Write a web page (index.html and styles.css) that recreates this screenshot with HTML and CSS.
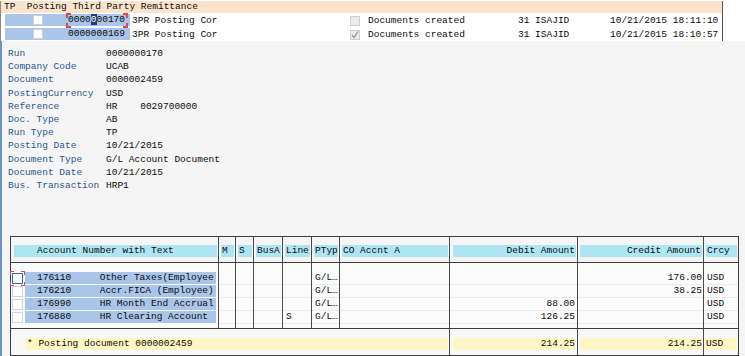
FILE: index.html
```html
<!DOCTYPE html>
<html lang="en">

<head>
    <meta charset="UTF-8" />
    <title>Posting Third Party Remittance</title>
    <link rel="stylesheet" href="styles.css">
</head>

<body>
    <div class="runs">
        <div class="runs-head">TP  Posting Third Party Remittance</div>
        <div class="run-row">
            <span class="key tp"></span>
            <span class="key post"><span class="box"></span></span>
            <span class="key num focus">0000<span class="caret">0</span>00170</span>
            <span class="desc">3PR Posting Cor</span>
            <span class="status"><span class="box off"></span></span>
            <span class="msg">Documents created</span>
            <span class="user">31 ISAJID</span>
            <span class="stamp">10/21/2015 18:11:10</span>
        </div>
        <div class="run-row">
            <span class="key tp"></span>
            <span class="key post"><span class="box"></span></span>
            <span class="key num">0000000169</span>
            <span class="desc">3PR Posting Cor</span>
            <span class="status"><span class="box off"><svg width="8" height="8" viewBox="0 0 8 8"><polyline points="1,4 3,6.5 7,0.5" fill="none" stroke="#8a8a8a" stroke-width="1.2" /></svg></span></span>
            <span class="msg">Documents created</span>
            <span class="user">31 ISAJID</span>
            <span class="stamp">10/21/2015 18:10:57</span>
        </div>
    </div>

    <div class="panel">
        <dl class="details">
            <div class="field"><dt>Run</dt><dd>0000000170</dd></div>
            <div class="field"><dt>Company Code</dt><dd>UCAB</dd></div>
            <div class="field"><dt>Document</dt><dd>0000002459</dd></div>
            <div class="field"><dt>PostingCurrency</dt><dd>USD</dd></div>
            <div class="field"><dt>Reference</dt><dd>HR    0029700000</dd></div>
            <div class="field"><dt>Doc. Type</dt><dd>AB</dd></div>
            <div class="field"><dt>Run Type</dt><dd>TP</dd></div>
            <div class="field"><dt>Posting Date</dt><dd>10/21/2015</dd></div>
            <div class="field"><dt>Document Type</dt><dd>G/L Account Document</dd></div>
            <div class="field"><dt>Document Date</dt><dd>10/21/2015</dd></div>
            <div class="field"><dt>Bus. Transaction</dt><dd>HRP1</dd></div>
        </dl>

        <div class="grid">
            <div class="grid-head">
                <div class="col c-acct"><span class="title acct-title">Account Number with Text</span></div>
                <div class="col c-m"><span class="title">M</span></div>
                <div class="col c-s"><span class="title">S</span></div>
                <div class="col c-busa"><span class="title">BusA</span></div>
                <div class="col c-line"><span class="title">Line</span></div>
                <div class="col c-ptyp"><span class="title">PTyp</span></div>
                <div class="col c-co"><span class="title">CO Accnt A</span></div>
                <div class="col c-debit"><span class="title right">Debit Amount</span></div>
                <div class="col c-credit"><span class="title right">Credit Amount</span></div>
                <div class="col c-crcy"><span class="title">Crcy</span></div>
            </div>

            <div class="grid-body">
                <div class="col c-acct">
                    <div class="cell acct"><span class="box focus-box"></span><span class="sel">176110     Other Taxes(Employee</span></div>
                    <div class="cell acct"><span class="box"></span><span class="sel">176210     Accr.FICA (Employee)</span></div>
                    <div class="cell acct"><span class="box"></span><span class="sel">176990     HR Month End Accrual</span></div>
                    <div class="cell acct"><span class="box"></span><span class="sel">176880     HR Clearing Account</span></div>
                </div>
                <div class="col c-m">
                    <div class="cell"></div><div class="cell"></div><div class="cell"></div><div class="cell"></div>
                </div>
                <div class="col c-s">
                    <div class="cell"></div><div class="cell"></div><div class="cell"></div><div class="cell"></div>
                </div>
                <div class="col c-busa">
                    <div class="cell"></div><div class="cell"></div><div class="cell"></div><div class="cell"></div>
                </div>
                <div class="col c-line">
                    <div class="cell"></div><div class="cell"></div><div class="cell"></div><div class="cell">S</div>
                </div>
                <div class="col c-ptyp">
                    <div class="cell">G/L…</div><div class="cell">G/L…</div><div class="cell">G/L…</div><div class="cell">G/L…</div>
                </div>
                <div class="col c-co">
                    <div class="cell"></div><div class="cell"></div><div class="cell"></div><div class="cell"></div>
                </div>
                <div class="col c-debit">
                    <div class="cell amount"></div>
                    <div class="cell amount"></div>
                    <div class="cell amount">88.00</div>
                    <div class="cell amount">126.25</div>
                </div>
                <div class="col c-credit">
                    <div class="cell amount">176.00</div>
                    <div class="cell amount">38.25</div>
                    <div class="cell amount"></div>
                    <div class="cell amount"></div>
                </div>
                <div class="col c-crcy">
                    <div class="cell">USD</div><div class="cell">USD</div><div class="cell">USD</div><div class="cell">USD</div>
                </div>
            </div>

            <div class="grid-foot">
                <div class="col c-total"><span class="sum total-text">* Posting document 0000002459</span></div>
                <div class="col c-debit"><span class="sum debit-sum">214.25</span></div>
                <div class="col c-credit"><span class="sum credit-sum">214.25</span></div>
                <div class="col c-crcy"><span class="sum crcy-sum">USD</span></div>
            </div>
        </div>
    </div>
</body>

</html>
```

FILE: styles.css
```css
body {
    margin: 0;
    width: 745px;
    height: 356px;
    overflow: hidden;
    background: #fff;
    font-family: 'Liberation Mono', 'DejaVu Sans Mono', monospace;
    font-size: 9.5px;
    color: #0c0c0c;
}

/* run list */

.runs {
    width: 723px;
    height: 40px;
    box-sizing: border-box;
    border-left: 1px solid #8a8a8a;
    border-right: 1px solid #555;
}

.runs-head {
    margin-top: 1px;
    height: 12px;
    line-height: 12px;
    padding-left: 3px;
    background: #fbe3cc;
    white-space: pre;
}

.run-row {
    display: flex;
    height: 13px;
    line-height: 13px;
    margin-top: 1px;
    padding-left: 4px;
    white-space: pre;
}

.key {
    background: #a9c5ea;
    height: 12px;
    line-height: 12px;
}

.tp {
    width: 23px;
}

.post {
    width: 38px;
    display: flex;
    align-items: center;
}

.post .box {
    margin-left: 5px;
}

.num {
    width: 62px;
    padding-left: 2px;
    position: relative;
}

.caret {
    background: #1f3c74;
    color: #fff;
}

.focus::after {
    content: "";
    position: absolute;
    left: 0;
    top: -1px;
    width: 62px;
    height: 15px;
    background:
        linear-gradient(#e04a4a, #e04a4a) left top / 5px 2px no-repeat,
        linear-gradient(#e04a4a, #e04a4a) left top / 2px 5px no-repeat,
        linear-gradient(#e04a4a, #e04a4a) right top / 5px 2px no-repeat,
        linear-gradient(#e04a4a, #e04a4a) right top / 2px 5px no-repeat,
        linear-gradient(#e04a4a, #e04a4a) left bottom / 5px 2px no-repeat,
        linear-gradient(#e04a4a, #e04a4a) left bottom / 2px 5px no-repeat,
        linear-gradient(#e04a4a, #e04a4a) right bottom / 5px 2px no-repeat,
        linear-gradient(#e04a4a, #e04a4a) right bottom / 2px 5px no-repeat;
}

.desc {
    margin-left: 2px;
    width: 218px;
}

.status {
    width: 18px;
    display: flex;
    align-items: center;
    white-space: normal;
}

.msg {
    width: 150px;
}

.user {
    width: 92px;
}

.box {
    display: inline-block;
    box-sizing: border-box;
    width: 10px;
    height: 10px;
    background: #fff;
    border: 1px solid #d2d2d2;
}

.box.off {
    background: #ececec;
    border-color: #cfcfcf;
}

.box svg {
    display: block;
}

/* detail panel */

.panel {
    height: 316px;
    box-sizing: border-box;
    padding: 6px 0 0 6px;
    background: #f5f5f5;
    border-left: 2px solid #6a93c6;
}

.details {
    margin: 0;
}

.field {
    display: flex;
    height: 13.2px;
    line-height: 13.2px;
    white-space: pre;
}

.field dt {
    width: 98px;
    color: #2a5590;
}

.field dd {
    margin: 0;
}

/* account grid */

.grid {
    margin: 44px 0 0 2px;
    width: 729px;
    box-sizing: border-box;
    border: 1px solid #3c3c3c;
    background: #fbfbfb;
}

.grid-head,
.grid-body,
.grid-foot {
    display: flex;
}

.grid-head {
    height: 26px;
    box-sizing: border-box;
    border-bottom: 1px solid #3c3c3c;
    background: #f5f5f5;
}

.grid-body {
    height: 66px;
    box-sizing: border-box;
    border-bottom: 1px solid #3c3c3c;
}

.grid-foot {
    height: 26px;
    background: #f8f8f8;
}

.col {
    box-sizing: border-box;
    border-right: 1px solid #4a4a4a;
}

.grid-head .col {
    padding-top: 8px;
}

.grid-body .col {
    padding-top: 9px;
}

.grid-foot .col {
    padding-top: 9px;
}

.c-acct { width: 208px; }
.c-m { width: 17px; }
.c-s { width: 18px; }
.c-busa { width: 29px; }
.c-line { width: 29px; }
.c-ptyp { width: 28px; }
.c-co { width: 110px; }
.c-debit { width: 128px; }
.c-credit { width: 126px; }
.c-crcy { width: 34px; border-right: none; }
.c-total { width: 439px; }

.title {
    display: block;
    height: 12px;
    line-height: 12px;
    margin: 0 1px 0 2px;
    padding-left: 1px;
    background: #ade5f2;
    white-space: pre;
}

.title.right {
    text-align: right;
    padding: 0 1px 0 0;
}

.acct-title {
    margin-left: 3px;
    padding-left: 23px;
}

.c-debit .title {
    margin-left: 3px;
}

.cell {
    height: 13px;
    line-height: 12px;
    box-sizing: border-box;
    border-bottom: 1px solid #ececec;
    padding: 0 3px;
    white-space: pre;
}

.cell.amount {
    text-align: right;
    padding: 0 2px 0 0;
}

.c-credit .cell.amount {
    padding-right: 1px;
}

.cell.acct {
    display: flex;
    align-items: center;
    padding: 0 1px;
    border-bottom: none;
}

.acct .box {
    width: 11px;
    height: 11px;
    flex: none;
}

.focus-box {
    border-color: #2f6db5;
    position: relative;
}

.focus-box::after {
    content: "";
    position: absolute;
    left: -3px;
    top: -3px;
    width: 15px;
    height: 15px;
    background:
        linear-gradient(#e04a4a, #e04a4a) left top / 4px 1px no-repeat,
        linear-gradient(#e04a4a, #e04a4a) left top / 1px 4px no-repeat,
        linear-gradient(#e04a4a, #e04a4a) right top / 4px 1px no-repeat,
        linear-gradient(#e04a4a, #e04a4a) right top / 1px 4px no-repeat,
        linear-gradient(#e04a4a, #e04a4a) left bottom / 4px 1px no-repeat,
        linear-gradient(#e04a4a, #e04a4a) left bottom / 1px 4px no-repeat,
        linear-gradient(#e04a4a, #e04a4a) right bottom / 4px 1px no-repeat,
        linear-gradient(#e04a4a, #e04a4a) right bottom / 1px 4px no-repeat;
}

.sel {
    flex: 1;
    height: 12px;
    margin: 0 1px 1px 2px;
    padding-left: 12px;
    background: #a9c5ea;
    line-height: 12px;
}

.sum {
    display: block;
    height: 12px;
    line-height: 12px;
    background: #fdf7c3;
    white-space: pre;
}

.total-text {
    margin: 0 1px 0 14px;
    padding-left: 2px;
}

.debit-sum {
    margin: 0 2px 0 3px;
    text-align: right;
}

.credit-sum {
    margin: 0 1px 0 2px;
    text-align: right;
}

.crcy-sum {
    margin: 0 1px;
    padding-left: 1px;
}
```
